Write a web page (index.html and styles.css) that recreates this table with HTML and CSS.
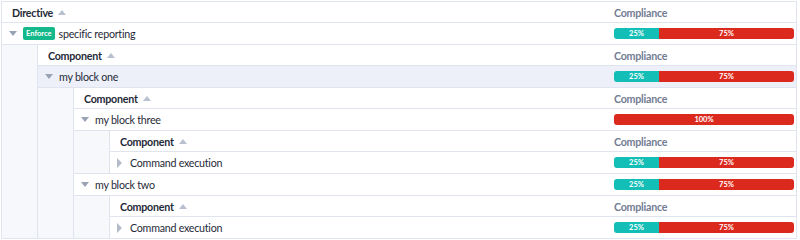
FILE: index.html
```html
<!DOCTYPE html>
<html>
<head>
<meta charset="utf-8">
<link rel="stylesheet" href="styles.css">
</head>
<body>
<div class="table root">
  <div class="row head">
    <div class="name">Directive <span class="sort"></span></div>
    <div class="comp">Compliance</div>
  </div>
  <div class="row">
    <div class="name"><span class="caret down"></span><span class="badge">Enforce</span>specific reporting</div>
    <div class="comp"><div class="bar"><span class="ok" style="width:25%">25%</span><span class="ko" style="width:75%">75%</span></div></div>
  </div>
  <div class="nest">
    <div class="gutter"></div>
    <div class="table">
      <div class="row head">
        <div class="name">Component <span class="sort"></span></div>
        <div class="comp">Compliance</div>
      </div>
      <div class="row selected">
        <div class="name"><span class="caret down"></span>my block one</div>
        <div class="comp"><div class="bar"><span class="ok" style="width:25%">25%</span><span class="ko" style="width:75%">75%</span></div></div>
      </div>
      <div class="nest">
        <div class="gutter"></div>
        <div class="table">
          <div class="row head">
            <div class="name">Component <span class="sort"></span></div>
            <div class="comp">Compliance</div>
          </div>
          <div class="row">
            <div class="name"><span class="caret down"></span>my block three</div>
            <div class="comp"><div class="bar"><span class="ko" style="width:100%">100%</span></div></div>
          </div>
          <div class="nest">
            <div class="gutter"></div>
            <div class="table">
              <div class="row head">
                <div class="name">Component <span class="sort"></span></div>
                <div class="comp">Compliance</div>
              </div>
              <div class="row">
                <div class="name"><span class="caret right"></span>Command execution</div>
                <div class="comp"><div class="bar"><span class="ok" style="width:25%">25%</span><span class="ko" style="width:75%">75%</span></div></div>
              </div>
            </div>
          </div>
          <div class="row">
            <div class="name"><span class="caret down"></span>my block two</div>
            <div class="comp"><div class="bar"><span class="ok" style="width:25%">25%</span><span class="ko" style="width:75%">75%</span></div></div>
          </div>
          <div class="nest">
            <div class="gutter"></div>
            <div class="table">
              <div class="row head">
                <div class="name">Component <span class="sort"></span></div>
                <div class="comp">Compliance</div>
              </div>
              <div class="row last">
                <div class="name"><span class="caret right"></span>Command execution</div>
                <div class="comp"><div class="bar"><span class="ok" style="width:25%">25%</span><span class="ko" style="width:75%">75%</span></div></div>
              </div>
            </div>
          </div>
        </div>
      </div>
    </div>
  </div>
</div>
</body>
</html>
```
FILE: styles.css
```css
html, body {
  margin: 0;
  padding: 0;
  background: #fff;
}
body {
  padding: 1px 3px 1px 1px;
  font-family: Lato, "Open Sans", sans-serif;
  font-size: 10.7px;
  letter-spacing: -0.25px;
  color: #1f2a37;
}
.table {
  display: flex;
  flex-direction: column;
  flex: 1;
  min-width: 0;
}
.root {
  border: 1px solid #dfe4ee;
  border-bottom: none;
}
.row {
  display: flex;
  align-items: center;
  height: 21px;
  border-bottom: 1px solid #dfe4ee;
}
.row.head {
  height: 20px;
  font-weight: bold;
}
.row.selected {
  background: #edf0f8;
}
.name {
  flex: 1;
  display: flex;
  align-items: center;
  padding-left: 6px;
  white-space: nowrap;
}
.head .name {
  padding-left: 10px;
}
.comp {
  width: 180px;
  flex: none;
  padding-right: 2px;
}
.head .comp {
  color: #737d93;
}
.sort {
  display: inline-block;
  width: 0;
  height: 0;
  margin-left: 5px;
  border-left: 4px solid transparent;
  border-right: 4px solid transparent;
  border-bottom: 5px solid #b9c0cf;
}
.caret {
  display: inline-block;
  width: 0;
  height: 0;
  margin-right: 6px;
}
.caret.down {
  margin-left: 1px;
  border-left: 4px solid transparent;
  border-right: 4px solid transparent;
  border-top: 5px solid #9aa3b5;
}
.caret.right {
  margin-left: 1px;
  margin-right: 8px;
  border-top: 5px solid transparent;
  border-bottom: 5px solid transparent;
  border-left: 5px solid #b4bbc9;
}
.badge {
  background: #13b98a;
  color: #fff;
  font-size: 7.5px;
  letter-spacing: 0;
  font-weight: bold;
  padding: 1px 3px;
  height: 11px;
  line-height: 11px;
  border-radius: 2px;
  margin-right: 4px;
}
.bar {
  display: flex;
  height: 11px;
  border-radius: 3px;
  overflow: hidden;
  font-size: 7.5px;
  letter-spacing: 0;
  line-height: 11px;
  color: #fff;
  font-weight: bold;
}
.bar span {
  text-align: center;
}
.ok {
  background: #13beb6;
}
.ko {
  background: #dc291e;
}
.nest {
  display: flex;
  border-bottom: 1px solid #dfe4ee;
}
.gutter {
  width: 35px;
  flex: none;
  background: #f6f8fc;
  border-right: 1px solid #dfe4ee;
}
.nest > .table > .row:last-child {
  border-bottom: none;
}
.nest > .table > .nest:last-child {
  border-bottom: none;
}
```
